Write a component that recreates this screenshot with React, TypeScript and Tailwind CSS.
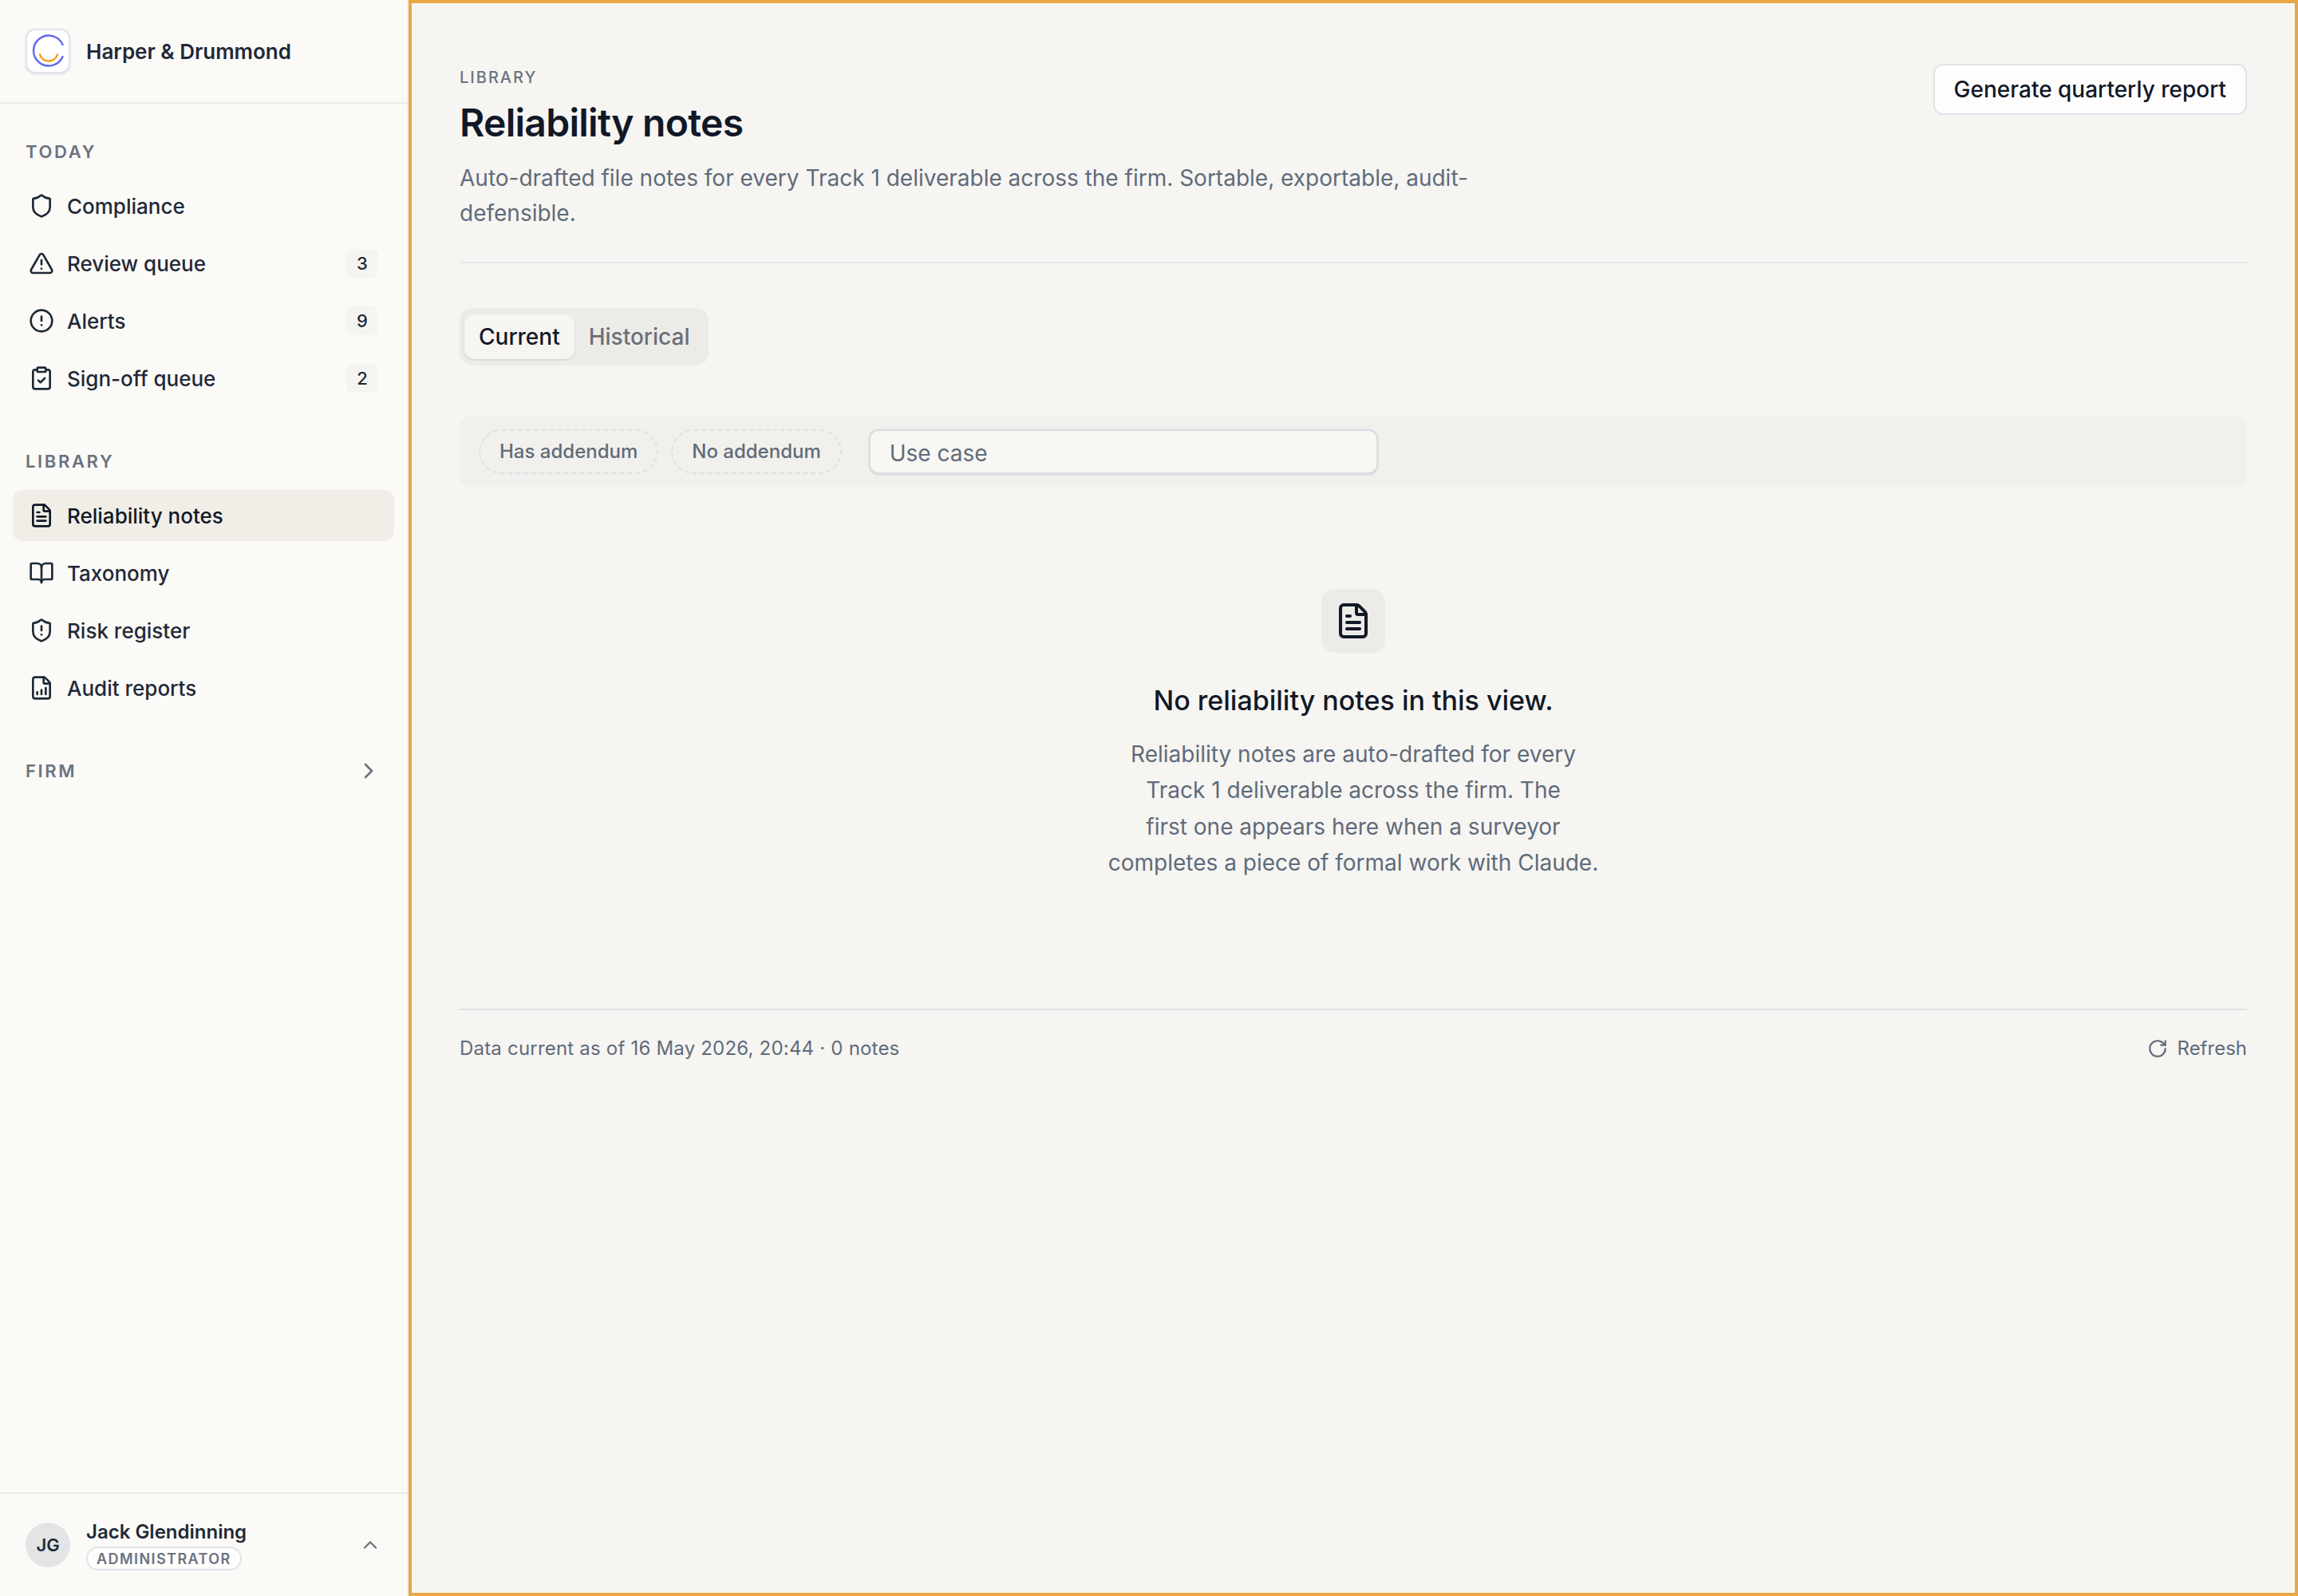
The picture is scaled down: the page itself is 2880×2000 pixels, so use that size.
import {
  BookOpen,
  ChevronRight,
  ChevronUp,
  CircleAlert,
  ClipboardCheck,
  FileChartColumnIncreasing,
  FileText,
  RotateCw,
  Shield,
  ShieldAlert,
  TriangleAlert,
  type LucideIcon,
} from 'lucide-react';

interface NavItem {
  label: string;
  icon: LucideIcon;
  badge?: number;
  active?: boolean;
}

const today: NavItem[] = [
  { label: 'Compliance', icon: Shield },
  { label: 'Review queue', icon: TriangleAlert, badge: 3 },
  { label: 'Alerts', icon: CircleAlert, badge: 9 },
  { label: 'Sign-off queue', icon: ClipboardCheck, badge: 2 },
];

const library: NavItem[] = [
  { label: 'Reliability notes', icon: FileText, active: true },
  { label: 'Taxonomy', icon: BookOpen },
  { label: 'Risk register', icon: ShieldAlert },
  { label: 'Audit reports', icon: FileChartColumnIncreasing },
];

function Logo() {
  return (
    <div className="flex h-14 w-14 shrink-0 items-center justify-center rounded-xl border-2 border-[#e1e4ea] bg-white shadow-sm">
      <svg width="44" height="44" viewBox="0 0 44 44" fill="none" strokeLinecap="round">
        <path d="M40.5 14A19 19 0 1 0 40.5 29" stroke="#6366f1" strokeWidth="2.4" />
        <path d="M12 26.3A11.5 11.5 0 0 0 34 26.3" stroke="#f59e0b" strokeWidth="2.4" />
      </svg>
    </div>
  );
}

function SectionLabel({ children }: { children: string }) {
  return (
    <div className="text-[22px] leading-8 font-semibold tracking-[0.12em] text-[#6b7280] uppercase">{children}</div>
  );
}

function NavRow({ item }: { item: NavItem }) {
  const Icon = item.icon;
  return (
    <a
      className={`flex h-16 items-center gap-4 rounded-xl pr-5 pl-5 text-[26px] font-medium ${
        item.active ? 'bg-[#f0eee7] text-[#111827]' : 'text-[#1f2937]'
      }`}
    >
      <Icon size={32} strokeWidth={2} className="shrink-0" />
      <span className="flex-1">{item.label}</span>
      {item.badge !== undefined && (
        <span className="flex h-9 w-10 items-center justify-center rounded-lg bg-[#f5f4f1] text-[22px] font-medium text-[#1f2937]">
          {item.badge}
        </span>
      )}
    </a>
  );
}

function Sidebar() {
  return (
    <aside className="flex w-[512px] shrink-0 flex-col border-r-2 border-[#e9ebed] bg-[#fbfaf7]">
      <div className="flex h-[130px] shrink-0 items-center gap-5 border-b-2 border-[#e9ebed] px-8">
        <Logo />
        <span className="text-[26px] font-semibold text-[#1f2937]">Harper &amp; Drummond</span>
      </div>

      <nav className="flex flex-1 flex-col gap-14 pt-11">
        <section>
          <div className="mb-5 px-8">
            <SectionLabel>Today</SectionLabel>
          </div>
          <div className="flex flex-col gap-2 px-4">
            {today.map((item) => (
              <NavRow key={item.label} item={item} />
            ))}
          </div>
        </section>
        <section>
          <div className="mb-5 px-8">
            <SectionLabel>Library</SectionLabel>
          </div>
          <div className="flex flex-col gap-2 px-4">
            {library.map((item) => (
              <NavRow key={item.label} item={item} />
            ))}
          </div>
        </section>
        <section className="flex items-center justify-between px-8">
          <SectionLabel>Firm</SectionLabel>
          <ChevronRight size={32} strokeWidth={2} className="text-[#6b7280]" />
        </section>
      </nav>

      <div className="flex h-[130px] shrink-0 items-center gap-5 border-t-2 border-[#e9ebed] px-8">
        <div className="flex h-14 w-14 shrink-0 items-center justify-center rounded-full bg-[#e2e4e6] text-[22px] font-semibold text-[#1f2937]">
          JG
        </div>
        <div className="flex flex-1 flex-col items-start gap-0.5">
          <span className="text-[24px] leading-8 font-semibold text-[#1f2937]">Jack Glendinning</span>
          <span className="flex h-[30px] items-center rounded-full border-2 border-[#e0e3e9] bg-[#fdfdfc] px-[11px] text-[18px] font-semibold tracking-[0.08em] text-[#6b7280] uppercase">
            Administrator
          </span>
        </div>
        <ChevronUp size={28} strokeWidth={2} className="text-[#6b7280]" />
      </div>
    </aside>
  );
}

function FilterPill({ children }: { children: string }) {
  return (
    <button className="flex h-14 items-center rounded-full border-2 border-dashed border-[#dde0e7] px-6 text-[24px] font-medium text-[#5f6b7a]">
      {children}
    </button>
  );
}

function EmptyState() {
  return (
    <div className="flex flex-col items-center pt-32">
      <div className="flex h-20 w-20 items-center justify-center rounded-2xl bg-[#ecebe8] text-[#111827]">
        <FileText size={48} strokeWidth={2} />
      </div>
      <h2 className="mt-[34px] text-[34px] leading-[52px] font-medium text-[#111827]">
        No reliability notes in this view.
      </h2>
      <p className="mt-[19px] w-[640px] text-center text-[28px] leading-[45.3px] text-balance text-[#5f6b7a]">
        Reliability notes are auto-drafted for every Track 1 deliverable across the firm. The first one appears here
        when a surveyor completes a piece of formal work with Claude.
      </p>
    </div>
  );
}

export default function App() {
  return (
    <div className="flex h-screen w-screen font-[Inter,sans-serif]">
      <Sidebar />
      <main className="min-w-0 flex-1 border-4 border-[#e9a745] bg-[#f6f5f2] px-[60px] pt-[77px]">
        <header className="flex items-start justify-between border-b-2 border-[#e5e7eb] pb-[39px]">
          <div>
            <div className="text-[20px] leading-8 font-medium tracking-[0.1em] text-[#6b7280] uppercase">Library</div>
            <h1 className="mt-[9px] text-[48px] leading-16 font-semibold tracking-[-0.015em] text-[#111827]">
              Reliability notes
            </h1>
            <p className="mt-[15px] max-w-[1344px] text-[28px] leading-[44px] text-[#5f6b7a]">
              Auto-drafted file notes for every Track 1 deliverable across the firm. Sortable, exportable,
              audit-defensible.
            </p>
          </div>
          <button className="-mt-px h-16 rounded-xl border-2 border-[#e0e3e9] bg-[#fefdfc] px-6 text-[28px] font-medium text-[#111827]">
            Generate quarterly report
          </button>
        </header>

        <div className="mt-14 inline-flex h-[72px] items-start rounded-2xl bg-[#ecebe8] px-1.5 py-2">
          <button className="h-14 rounded-xl bg-[#f6f5f2] px-[18px] text-[28px] font-medium text-[#111827] shadow-sm">
            Current
          </button>
          <button className="h-14 px-[18px] text-[28px] font-medium text-[#6b6f76]">Historical</button>
        </div>

        <div className="mt-16 flex h-[88px] items-center gap-4 rounded-xl bg-[#f1f0ec] px-6">
          <FilterPill>Has addendum</FilterPill>
          <FilterPill>No addendum</FilterPill>
          <input
            placeholder="Use case"
            className="ml-[18px] h-14 w-[638px] rounded-xl border-2 border-[#d9dce3] bg-[#f8f7f4] px-6 pt-1 text-[28px] text-[#5f6b7a] shadow-sm outline-none placeholder:text-[#5f6b7a]"
          />
        </div>

        <EmptyState />

        <footer className="mt-[160px] flex items-center justify-between border-t-2 border-[#dfe1e6] pt-[30px] text-[24px] text-[#5f6b7a]">
          <span className="tracking-[0.2px]">Data current as of 16 May 2026, 20:44 · 0 notes</span>
          <button className="flex items-center gap-3">
            <RotateCw size={26} strokeWidth={2} />
            Refresh
          </button>
        </footer>
      </main>
    </div>
  );
}
